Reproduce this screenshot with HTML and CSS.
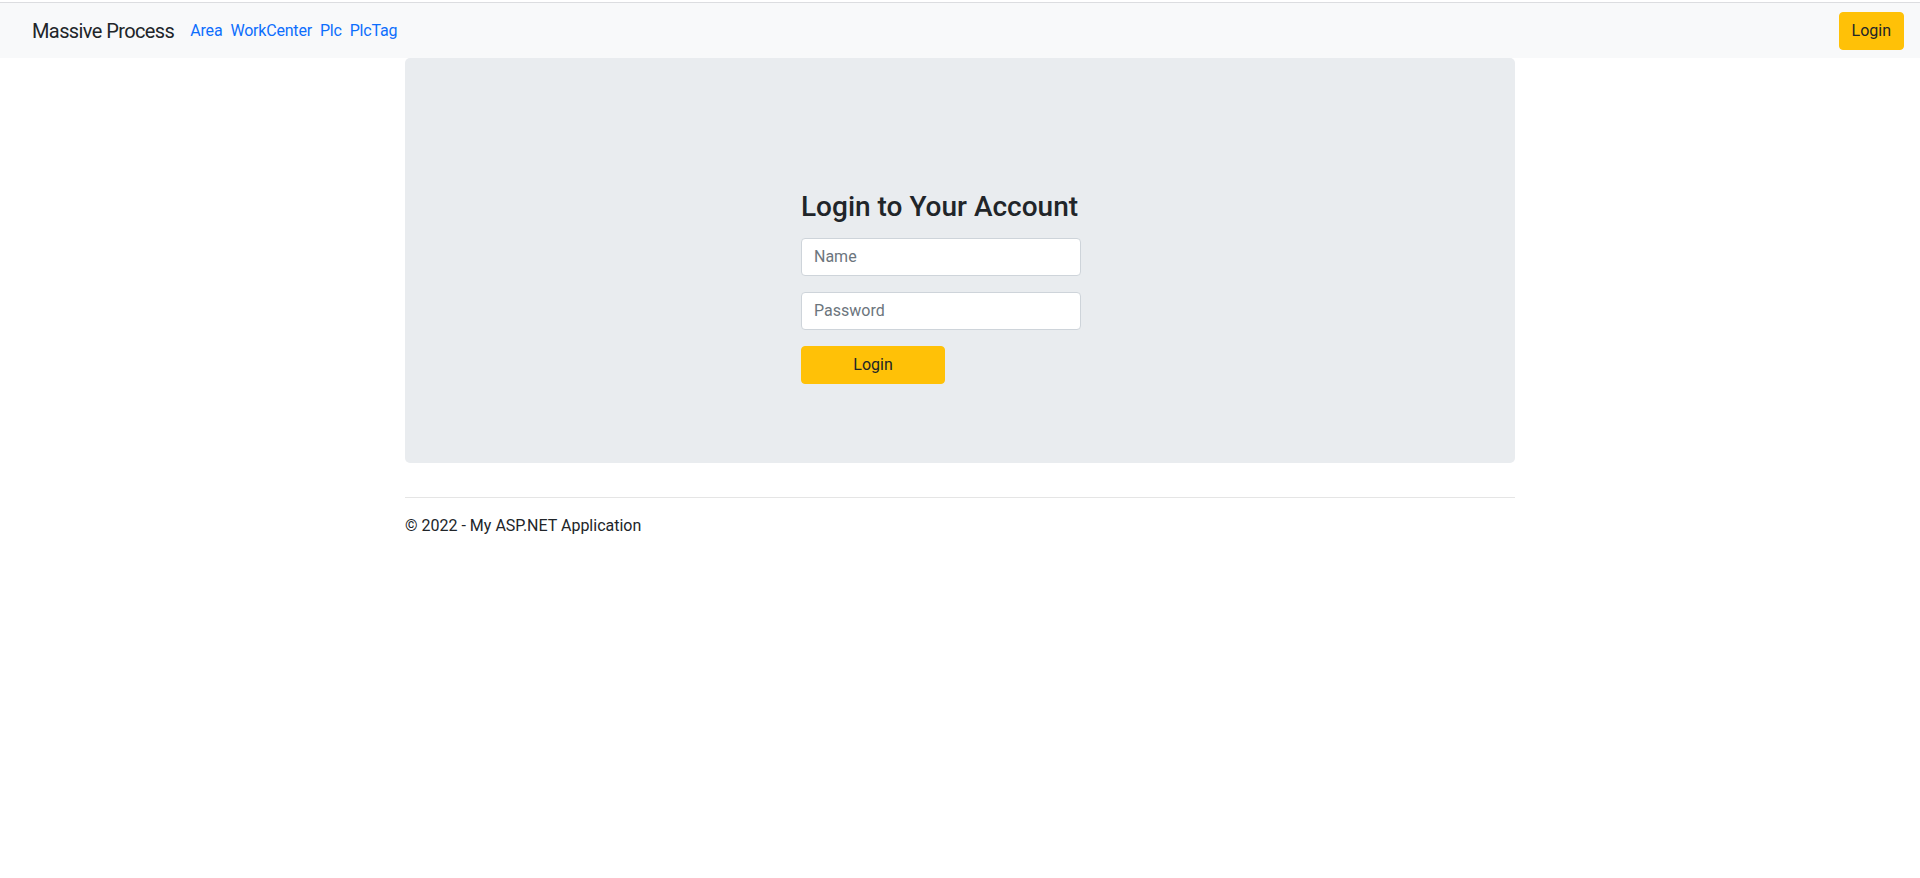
FILE: index.html
```html
<!DOCTYPE html>
<html lang="en">
<head>
<meta charset="utf-8">
<title>Massive Process</title>
<link rel="stylesheet" href="styles.css">
</head>
<body>
<header class="navbar">
  <a class="brand" href="#">Massive Process</a>
  <nav class="nav-links">
    <a href="#">Area</a>
    <a href="#">WorkCenter</a>
    <a href="#">Plc</a>
    <a href="#">PlcTag</a>
  </nav>
  <div class="spacer"></div>
  <button class="btn btn-warning nav-login" type="button">Login</button>
</header>
<main class="container">
  <section class="jumbotron">
    <form class="login-form">
      <h3 class="login-title">Login to Your Account</h3>
      <input class="form-control" type="text" placeholder="Name">
      <input class="form-control" type="password" placeholder="Password">
      <button class="btn btn-warning submit" type="submit">Login</button>
    </form>
  </section>
  <footer class="footer">
    <hr class="rule">
    <p class="copy">&copy; 2022 - My ASP.NET Application</p>
  </footer>
</main>
</body>
</html>
```
FILE: styles.css
```css
* { box-sizing: border-box; }
html, body {
  margin: 0;
  padding: 0;
  background: #fff;
}
body {
  font-family: "Segoe UI", Roboto, "Noto Sans", sans-serif;
  font-size: 16px;
  line-height: 1.5;
  color: #212529;
  padding-top: 2px;
}
.navbar {
  display: flex;
  align-items: center;
  height: 56px;
  padding: 0 16px 0 32px;
  background: #f8f9fa;
  border-top: 1px solid #dcdde0;
}
.brand {
  font-size: 20px;
  letter-spacing: -0.6px;
  color: #212529;
  text-decoration: none;
  margin-right: 16px;
  line-height: 1.5;
}
.nav-links {
  display: flex;
  gap: 8px;
  padding-top: 1px;
}
.nav-links a {
  color: #0d6efd;
  text-decoration: none;
  font-size: 16px;
  letter-spacing: -0.2px;
}
.spacer { flex: 1; }
.btn {
  font-family: inherit;
  font-size: 16px;
  line-height: 24px;
  height: 38px;
  padding: 6px 12px;
  border: 1px solid transparent;
  border-radius: 4px;
  color: #212529;
  cursor: pointer;
}
.btn-warning {
  background: #ffc107;
  border-color: #ffc107;
}
.nav-login { margin-top: 1px; }
.container {
  width: 1110px;
  margin: 0 auto;
}
.jumbotron {
  background: #e9ecef;
  border-radius: 5px;
  height: 405px;
  padding: 132px 0 0 396px;
}
.login-form {
  width: 282px;
  display: flex;
  flex-direction: column;
  align-items: flex-start;
}
.login-title {
  margin: 0 0 14px;
  font-size: 28px;
  font-weight: 500;
  line-height: 1.2;
  white-space: nowrap;
}
.form-control {
  width: 280px;
  height: 38px;
  padding: 6px 12px;
  font-family: inherit;
  font-size: 16px;
  color: #212529;
  background: #fff;
  border: 1px solid #ced4da;
  border-radius: 4px;
  margin-bottom: 16px;
}
.form-control::placeholder { color: #6c757d; }
.submit { width: 144px; }
.footer { padding-top: 34px; }
.rule {
  margin: 0;
  border: 0;
  border-top: 1px solid #e5e5e5;
}
.copy {
  margin: 0;
  padding-top: 16px;
  font-size: 16px;
}
```
